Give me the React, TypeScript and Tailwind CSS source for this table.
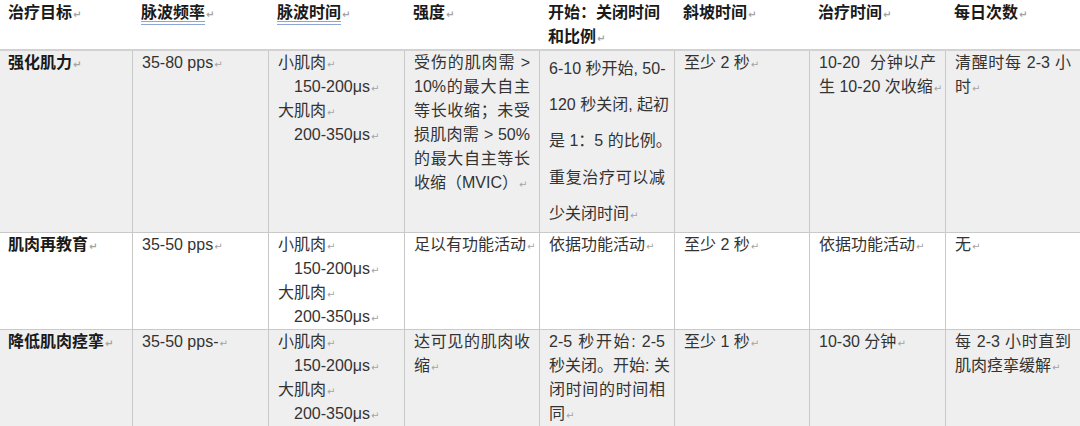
import React from "react";

type Para = { lines: string[]; indent?: boolean };
type Cell = { paras: Para[]; tall?: boolean };
type Row = { label: string; cells: Cell[]; shaded: boolean };

const p = (...lines: string[]): Para => ({ lines });
const ind = (line: string): Para => ({ lines: [line], indent: true });

const pulseTime: Cell = {
  paras: [p("小肌肉"), ind("150-200μs"), p("大肌肉"), ind("200-350μs")],
};

const headers: { lines: string[]; underline?: boolean }[] = [
  { lines: ["治疗目标"] },
  { lines: ["脉波频率"], underline: true },
  { lines: ["脉波时间"], underline: true },
  { lines: ["强度"] },
  { lines: ["开始：关闭时间", "和比例"] },
  { lines: ["斜坡时间"] },
  { lines: ["治疗时间"] },
  { lines: ["每日次数"] },
];

const rows: Row[] = [
  {
    label: "强化肌力",
    shaded: true,
    cells: [
      { paras: [p("35-80 pps")] },
      pulseTime,
      {
        paras: [
          p(
            "受伤的肌肉需 >",
            "10%的最大自主",
            "等长收缩；未受",
            "损肌肉需 > 50%",
            "的最大自主等长",
            "收缩（MVIC）"
          ),
        ],
      },
      {
        tall: true,
        paras: [
          p(
            "6-10 秒开始, 50-",
            "120 秒关闭, 起初",
            "是 1：5 的比例。",
            "重复治疗可以减",
            "少关闭时间"
          ),
        ],
      },
      { paras: [p("至少 2 秒")] },
      { paras: [p("10-20  分钟以产", "生 10-20 次收缩")] },
      { paras: [p("清醒时每 2-3 小", "时")] },
    ],
  },
  {
    label: "肌肉再教育",
    shaded: false,
    cells: [
      { paras: [p("35-50 pps")] },
      pulseTime,
      { paras: [p("足以有功能活动")] },
      { paras: [p("依据功能活动")] },
      { paras: [p("至少 2 秒")] },
      { paras: [p("依据功能活动")] },
      { paras: [p("无")] },
    ],
  },
  {
    label: "降低肌肉痉挛",
    shaded: true,
    cells: [
      { paras: [p("35-50 pps-")] },
      pulseTime,
      { paras: [p("达可见的肌肉收", "缩")] },
      {
        paras: [
          p("2-5 秒开始: 2-5", "秒关闭。开始: 关", "闭时间的时间相", "同"),
        ],
      },
      { paras: [p("至少 1 秒")] },
      { paras: [p("10-30 分钟")] },
      { paras: [p("每 2-3 小时直到", "肌肉痉挛缓解")] },
    ],
  },
];

// Word-style paragraph mark; line-height 0 so it never grows the line box
const Mark = () => (
  <span className="ml-px text-[10px] leading-[0] text-[#a3a3a3] font-['DejaVu_Sans',sans-serif]">
    ↵
  </span>
);

const CellBody = ({ cell }: { cell: Cell }) => (
  <div className={cell.tall ? "leading-[36.2px]" : "leading-[24px]"}>
    {cell.paras.map((para, pi) => (
      <div key={pi} className={para.indent ? "pl-4" : ""}>
        {para.lines.map((line, li) => {
          const last = li === para.lines.length - 1;
          return (
            <div
              key={li}
              className={
                last
                  ? "whitespace-pre"
                  : "whitespace-pre text-justify [text-align-last:justify]"
              }
            >
              {line}
              {last && <Mark />}
            </div>
          );
        })}
      </div>
    ))}
  </div>
);

export default function App() {
  return (
    <div className="w-[1080px] h-[426px] overflow-hidden bg-white text-[16px] text-[#333] font-['Liberation_Sans','Noto_Sans_CJK_SC',sans-serif]">
      <div className="grid grid-cols-[132px_136px_136px_135px_135px_135px_136px_135px]">
        {headers.map((h, i) => (
          <div
            key={i}
            className={`${i === 0 ? "pl-2" : "pl-[9px]"} pr-[8px] pt-px h-[51px] border-b-2 border-[#d2d2d2] font-bold text-[#1a1a1a] leading-[24px]`}
          >
            {h.lines.map((line, li) => {
              const last = li === h.lines.length - 1;
              return (
                <div key={li} className="whitespace-pre">
                  <span
                    className={
                      h.underline
                        ? "underline decoration-double decoration-[#8ea5d6] underline-offset-[3px]"
                        : ""
                    }
                  >
                    {line}
                  </span>
                  {last && <Mark />}
                </div>
              );
            })}
          </div>
        ))}

        {rows.map((row, ri) => (
          <React.Fragment key={ri}>
            <div
              className={`pl-2 pr-2 border-b border-[#c9c9c9] font-bold text-[#1a1a1a] leading-[24px] ${
                row.shaded ? "bg-[#efefef]" : "bg-white"
              }`}
            >
              {row.label}
              <Mark />
            </div>
            {row.cells.map((cell, ci) => (
              <div
                key={ci}
                className={`px-[9px] border-l border-b border-[#c9c9c9] ${
                  row.shaded ? "bg-[#efefef]" : "bg-white"
                }`}
              >
                <CellBody cell={cell} />
              </div>
            ))}
          </React.Fragment>
        ))}
      </div>
    </div>
  );
}
